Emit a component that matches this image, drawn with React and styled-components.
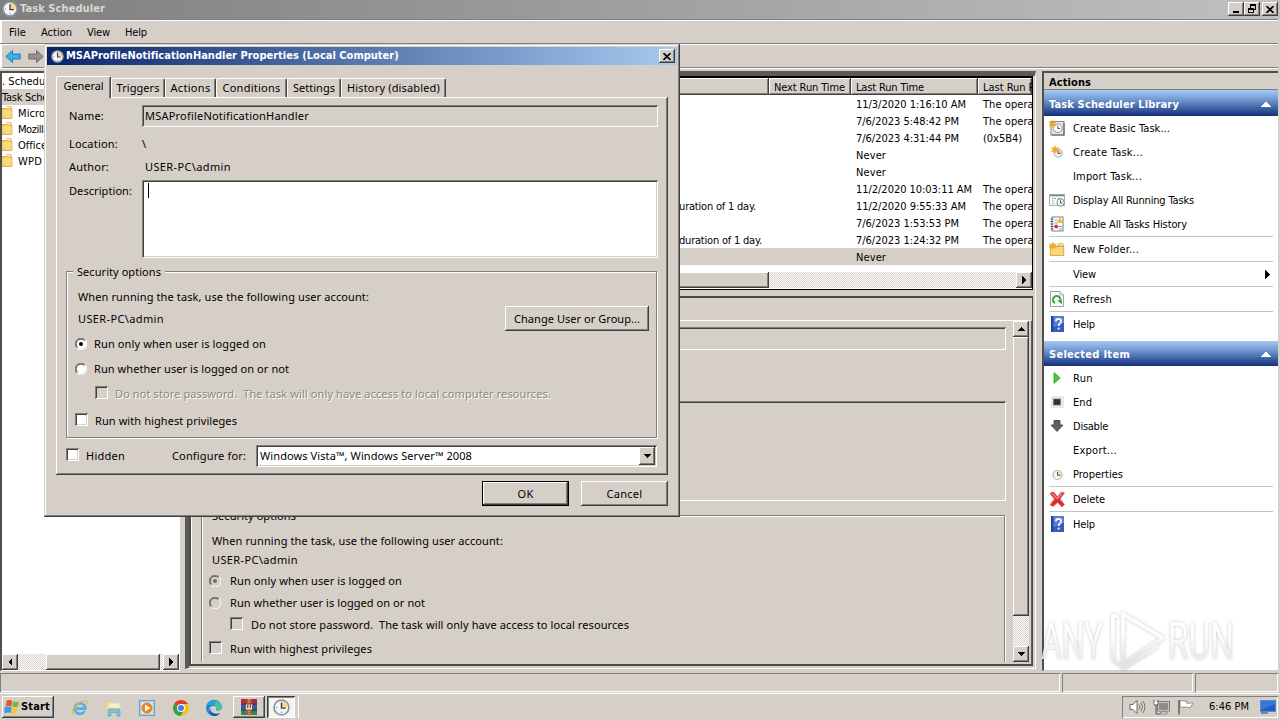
import React, { useLayoutEffect, useRef } from "react";
import styled, { createGlobalStyle, css } from "styled-components";

const FACE = "#d5cfc8";
const UI = `"DejaVu Sans Condensed", "DejaVu Sans", "Liberation Sans", sans-serif`;
const DLG = `"Noto Sans", "Open Sans", "Liberation Sans", sans-serif`;

const Global = createGlobalStyle`
  * { box-sizing: border-box; }
  html, body { margin: 0; padding: 0; }
  body { width: 1280px; height: 720px; overflow: hidden; background: ${FACE}; }
  svg { display: block; flex: none; }
`;

const raised = css`
  background: ${FACE};
  box-shadow: inset -1px -1px #404040, inset 1px 1px #fff, inset -2px -2px #808080;
`;
const sunken = css`
  box-shadow: inset 1px 1px #808080, inset -1px -1px #fff, inset 2px 2px #404040, inset -2px -2px #d4d0c8;
`;
const dither = css`
  background: repeating-conic-gradient(#fff 0 25%, #d4d0c8 0 50%) 0 0 / 2px 2px;
`;

/* ---------- text ---------- */
const TextSpan = styled.span`
  display: block;
  flex: none;
  white-space: pre;
  font-family: ${(p) => (p.$dlg ? DLG : UI)};
  font-stretch: ${(p) => (p.$dlg ? "normal" : "condensed")};
  font-size: 11px;
  line-height: 16px;
  padding-top: ${(p) => (p.$dlg || p.$flat ? 0 : 2)}px;
  font-weight: ${(p) => (p.$bold ? 700 : 400)};
  color: ${(p) => p.$color || "#000"};
  text-shadow: ${(p) => (p.$etched ? "1px 1px #fff" : "none")};
`;

/* Spreads the letters so that the label takes the given width. */
function Text({ w, children, ...rest }) {
  const ref = useRef(null);
  useLayoutEffect(() => {
    const el = ref.current;
    if (!w || !el) return;
    el.style.letterSpacing = "0px";
    el.style.width = "max-content";
    const natural = el.getBoundingClientRect().width;
    el.style.letterSpacing = (w - natural) / children.length + "px";
    el.style.width = w + "px";
  }, [w, children]);
  return (
    <TextSpan ref={ref} {...rest}>
      {children}
    </TextSpan>
  );
}

/* ---------- icons ---------- */
const Clock = ({ s = 16 }) => (
  <svg width={s} height={s} viewBox="0 0 16 16">
    <circle cx="8" cy="8" r="7" fill="#f4f6f8" stroke="#8b939c" strokeWidth="1.6" />
    <path d="M8 8V2.2A5.8 5.8 0 0 1 13.8 8Z" fill="#f7d777" />
    <path d="M8 3.2V8.6H12" fill="none" stroke="#33415c" strokeWidth="1.3" />
    <path d="M3 8h1M8 12v1.2" stroke="#777" />
  </svg>
);
const Star = ({ x = 0, y = 0 }) => (
  <path
    transform={`translate(${x} ${y})`}
    d="M3.5 0l1 2.2L7 1.6 5.6 3.6 7 5.6 4.5 5l-1 2.2L2.6 5 0 5.6l1.5-2L0 1.6l2.6.6z"
    fill="#f6a623"
    stroke="#e9a030"
    strokeWidth=".6"
  />
);
const BasicTask = () => (
  <svg width="16" height="16" viewBox="0 0 16 16">
    <rect x="2" y="1.5" width="13" height="13.5" fill="#e9e6e1" stroke="#8a837d" />
    <path d="M15 3v12H3" fill="none" stroke="#6b6560" strokeWidth="1.2" />
    <circle cx="8.8" cy="8.3" r="4.3" fill="#fff" stroke="#8b949d" />
    <path d="M8.8 5.6v3h2.4" fill="none" stroke="#555" />
    <Star />
  </svg>
);
const NewTask = () => (
  <svg width="16" height="16" viewBox="0 0 16 16">
    <circle cx="9.2" cy="9" r="4.3" fill="#eef1f6" stroke="#a9b3c0" />
    <path d="M9 9V5.2a3.8 3.8 0 0 1 3.8 3.8z" fill="#f7d777" />
    <path d="M9 6v3.4h2.600" fill="none" stroke="#465673" />
    <Star x={2.500} y={2} />
  </svg>
);
const Running = () => (
  <svg width="16" height="16" viewBox="0 0 16 16">
    <rect x=".5" y="2.5" width="15" height="11" fill="#fbfbf8" stroke="#a8b0aa" />
    <path d="M1 3.5h14" stroke="#7c8a94" strokeWidth="1.600" />
    <path d="M3 6.5h4M3 9h3M3 11.5h3M9 6.5h4" stroke="#8aa08c" strokeDasharray="1.5 1" />
    <circle cx="11.500" cy="10.500" r="3.700" fill="#f2f6f2" stroke="#7f9888" />
    <path d="M11.500 8.300v2.600h1.800" fill="none" stroke="#555" />
  </svg>
);
const History = () => (
  <svg width="16" height="16" viewBox="0 0 16 16">
    <rect x="3" y="1" width="11" height="14" fill="#fff" stroke="#76808c" />
    <path d="M1.5 3h3M1.5 5.5h3M1.5 8h3M1.5 10.5h3M1.5 13h3" stroke="#4d5867" />
    <path d="M5.5 4h3M5.5 7h3M9.5 10.5h4M9.5 13h4" stroke="#7f9ad0" />
    <path d="M11 2l2.5 4.5h-5z" fill="#f4c722" stroke="#e0b420" strokeWidth=".8" />
    <circle cx="7.200" cy="10.500" r="2" fill="#d43a32" />
  </svg>
);
const FolderNew = () => (
  <svg width="16" height="16" viewBox="0 0 16 16">
    <path d="M1 4.5h7.5l1-2.5H14l1 2.5V14.5H1z" fill="#e9b64a" />
    <rect x="10" y="2.8" width="3.6" height="1.6" fill="#dff0fb" />
    <path d="M1.2 5.5h13.6v9H1.2z" fill="#f9d77d" stroke="#dba43a" strokeWidth=".8" />
    <Star x={0.2} y={1.2} />
  </svg>
);
const TreeFolder = () => (
  <svg width="12" height="14" viewBox="0 0 12 14">
    <path d="M0 2h4l1-2h4l1 2v11H0z" fill="#e8b84e" />
    <rect x="4.500" y=".8" width="4" height="1.600" fill="#f7fbff" />
    <path d="M0 3h10v9.400H0z" fill="#f8d97e" stroke="#dcaa45" strokeWidth=".7" />
  </svg>
);
const Refresh = () => (
  <svg width="14" height="16" viewBox="0 0 14 16">
    <path d="M.5.5h9.5l3.5 3.5v11.500H.5z" fill="#fbfdfb" stroke="#9aa39b" />
    <path d="M10 .5V4h3.500" fill="#e3e8e3" stroke="#9aa39b" strokeWidth=".7" />
    <path d="M5 12A3.700 3.700 0 1 1 10.200 10" fill="none" stroke="#3aa83c" strokeWidth="2.100" />
    <path d="M7 9.300h5v4.200z" fill="#3aa83c" />
  </svg>
);
const HelpIcon = () => (
  <svg width="13" height="16" viewBox="0 0 13 16">
    <rect width="13" height="16" fill="#3a5dbd" />
    <rect width="2.500" height="16" fill="#27459b" />
    <path d="M2.500 0H13v7L2.500 11z" fill="#6c8ce0" opacity=".7" />
    <path d="M4.900 5.200c0-3.200 5.200-3.200 5.200 0 0 2.100-2.500 2.100-2.500 4.800" fill="none" stroke="#fff" strokeWidth="1.700" />
    <rect x="6.700" y="11.600" width="1.900" height="1.900" fill="#fff" />
  </svg>
);
const RunIcon = () => (
  <svg width="16" height="16" viewBox="0 0 16 16">
    <path d="M5 2.500L11.200 8 5 13.500z" fill="#4fc43c" stroke="#36a32a" strokeWidth=".8" />
  </svg>
);
const EndIcon = () => (
  <svg width="16" height="16" viewBox="0 0 16 16">
    <rect x="2" y="2" width="13" height="12" fill="#e9e8e8" />
    <rect x="4.500" y="5" width="7" height="6" fill="#2f3337" stroke="#70757a" strokeWidth=".7" />
  </svg>
);
const DisableIcon = () => (
  <svg width="16" height="16" viewBox="0 0 16 16">
    <path d="M5 2.500h6V7h3L8 13.500 2 7h3z" fill="#5d6064" stroke="#3b3e42" strokeWidth=".8" />
  </svg>
);
const DeleteIcon = () => (
  <svg width="17" height="17" viewBox="0 0 17 17">
    <path d="M2 1.500l2.500-.5 4 4.500 4-4.500 3 1-4.500 6 4.500 5.500-2.500 2.500-4.500-4.500L4 15.500l-3-1.700L5.500 8 1.200 3z" fill="#e02a2c" stroke="#d86c6c" strokeWidth=".8" />
    <path d="M3 2.500l5.300 5.200L13 2.500" fill="none" stroke="#f48a88" strokeWidth="1.200" />
  </svg>
);
const PropIcon = () => (
  <svg width="16" height="16" viewBox="0 0 16 16">
    <circle cx="8.500" cy="9" r="4.500" fill="#f3f3f4" stroke="#b3b3b8" strokeWidth="1.200" />
    <path d="M8.500 9V5.200A3.800 3.800 0 0 1 12.300 9z" fill="#f7dc9a" />
    <path d="M8.500 6v3.300h2.800" fill="none" stroke="#555" />
  </svg>
);
const Tri = ({ d, s = 8, c = "#000" }) => (
  <svg width={s} height={s} viewBox="0 0 8 8" shapeRendering="crispEdges">
    <path d={{ left: "M6 0v8L2 4z", right: "M2 0v8l4-4z", up: "M0 6h8L4 2z", down: "M0 2h8L4 6z" }[d]} fill={c} />
  </svg>
);
const Arrow = ({ flip }) => (
  <svg width="16" height="15" viewBox="0 0 16 15">
    <path
      transform={flip ? "translate(16 0) scale(-1 1)" : undefined}
      d="M.8 7.500L7.500 1.500V5h7.700v5H7.500v3.500z"
      fill={flip ? "#94918e" : "#3eaee8"}
      stroke={flip ? "#6e6b69" : "#1d7fbe"}
      strokeWidth="1"
    />
  </svg>
);

/* ---------- main window ---------- */
const Desktop = styled.div`
  width: 1280px;
  height: 720px;
  display: flex;
  flex-direction: column;
  background: ${FACE};
  overflow: hidden;
`;
const TitleBar = styled.div`
  height: 19px;
  flex: none;
  display: flex;
  align-items: center;
  gap: 2px;
  padding: 0 2px 1px;
  background: linear-gradient(90deg, #7f7f7f, #c0c0c0);
`;
const CaptionButtons = styled.div`
  margin-left: auto;
  display: flex;
`;
const CaptionButton = styled.div`
  ${raised}
  width: 16px;
  height: 14px;
  margin-left: ${(p) => p.$gap || 0}px;
  display: flex;
  align-items: center;
  justify-content: center;
`;
const MenuBar = styled.div`
  height: 25px;
  flex: none;
  border-top: 1px solid #808080;
  border-bottom: 1px solid #808080;
  margin-right: 2px;
  box-shadow: inset 2px 1px #fff;
  display: flex;
  align-items: center;
  padding-left: 9px;
  gap: 15px;
`;
const ToolBar = styled.div`
  height: 25px;
  flex: none;
  margin: 0 2px 0 0;
  box-shadow: inset 2px 1px #fff, inset 0 -1px #fff, inset 0 -2px #808080;
  padding: 5px 5px;
  display: flex;
  gap: 7px;
`;
const Body = styled.div`
  height: 602px;
  flex: none;
  margin-top: 2px;
  display: flex;
`;
const TreePane = styled.div`
  width: 181px;
  height: 600px;
  border-left: 2px solid #505050;
  border-top: 2px solid #505050;
  border-right: 1px solid #d4d0c8;
  border-bottom: 1px solid #fff;
  background: #fff;
  display: flex;
  flex-direction: column;
  overflow: hidden;
`;
const TreeRow = styled.div`
  height: 16px;
  flex: none;
  display: flex;
  align-items: center;
  gap: 4px;
  background: ${(p) => (p.$sel ? "#d4d0c8" : "#fff")};
`;
const HScroll = styled.div`
  ${dither}
  height: 16px;
  flex: none;
  margin-top: auto;
  margin-right: ${(p) => p.$mr || 0}px;
  display: flex;
`;
const ScrollButton = styled.div`
  ${raised}
  width: 16px;
  height: 16px;
  flex: none;
  display: flex;
  align-items: center;
  justify-content: center;
`;
const HThumb = styled.div`
  ${raised}
  height: 16px;
  width: ${(p) => p.$w}px;
  margin: 0 auto 0 ${(p) => p.$ml || 0}px;
`;
const CenterPane = styled.div`
  width: 851px;
  margin-left: 4px;
  height: 598px;
  background: ${FACE};
  border-left: 4px solid #5a5a5a;
  border-top: 5px solid #5a5a5a;
  border-right: 1px solid #fff;
  border-bottom: 1px solid #fff;
  padding: 0 2px 2px 0;
  display: flex;
  flex-direction: column;
`;
const TaskTable = styled.div`
  height: 214px;
  flex: none;
  border: solid #000;
  border-width: 2px 1px 1px 0;
  background: #fff;
  display: flex;
  flex-direction: column;
  overflow: hidden;
  padding-bottom: 1px;
`;
const TableRow = styled.div`
  display: grid;
  grid-template-columns: 580px 82px 127px 1fr;
  height: 17px;
  flex: none;
  align-items: center;
  overflow: hidden;
  background: ${(p) => (p.$sel ? "#d4d0c8" : "#fff")};
`;
const HeadCell = styled.div`
  ${raised}
  height: 17px;
  padding-left: 5px;
  overflow: hidden;
`;
const Cell = styled.div`
  padding-left: 5px;
  overflow: hidden;
`;
const TriggerCell = styled.div`
  display: flex;
  justify-content: flex-end;
  padding-right: ${(p) => p.$pr}px;
`;
const DetailPane = styled.div`
  margin-top: 6px;
  height: 370px;
  flex: none;
  border: solid #4a4a4a;
  border-width: 2px 1px 2px 2px;
  padding-top: 22px;
  display: flex;
  flex-direction: column;
`;
const DetailPage = styled.div`
  flex: 1;
  min-height: 0;
  border-top: 1px solid #fff;
  border-left: 1px solid #fff;
  border-right: 1px solid #606060;
  display: flex;
  justify-content: space-between;
  padding-right: 2px;
`;
const DetailForm = styled.div`
  width: 805px;
  margin-left: 9px;
  height: 341px;
  overflow: hidden;
`;
const DetailField = styled.div`
  ${sunken}
  height: ${(p) => p.$h}px;
  margin-top: ${(p) => p.$mt}px;
`;
const VScroll = styled.div`
  ${dither}
  width: 16px;
  height: 341px;
  display: flex;
  flex-direction: column;
`;
const VThumb = styled.div`
  ${raised}
  width: 16px;
  height: 279px;
  margin-bottom: auto;
`;
const ActionsPane = styled.div`
  width: 236px;
  height: 600px;
  margin-left: 6px;
  border: solid #505050;
  border-width: 2px 0 0 2px;
  border-bottom: 1px solid #d4d0c8;
  background: #fff;
  display: flex;
  flex-direction: column;
`;
const ActionsHead = styled.div`
  height: 17px;
  flex: none;
  padding-left: 5px;
  background: ${FACE};
  border-bottom: 1px solid #808080;
`;
const SectionHead = styled.div`
  height: ${(p) => p.$h}px;
  flex: none;
  margin-top: ${(p) => p.$mt || 0}px;
  padding: ${(p) => p.$pt || 0}px 7px 0 5px;
  display: flex;
  align-items: center;
  justify-content: space-between;
  background: linear-gradient(#a3c8f2, #7ba3d8 30%, #3f62a6 70%, #14307a);
`;
const ActionRow = styled.div`
  height: 24px;
  flex: none;
  display: flex;
  align-items: center;
  padding: 0 6px 0 4px;
`;
const ActionIcon = styled.div`
  width: 18px;
  margin-right: 7px;
  display: flex;
  justify-content: center;
`;
const Rule = styled.div`
  height: 1px;
  flex: none;
  margin: 0 5px;
  background: #c4c4c4;
`;
const Push = styled.div`
  margin-left: auto;
`;
const StatusBar = styled.div`
  height: 19px;
  flex: none;
  display: flex;
  gap: 2px;
  padding-right: 2px;
`;
const StatusCell = styled.div`
  width: ${(p) => p.$w}px;
  border: solid #808080;
  border-width: 1px 0 0 1px;
  box-shadow: inset -1px -1px #fff;
`;

/* ---------- dialog ---------- */
const Dialog = styled.div`
  position: absolute;
  left: 44px;
  top: 44px;
  width: 636px;
  height: 473px;
  padding: 3px;
  background: ${FACE};
  box-shadow: inset -1px -1px #404040, inset 1px 1px #d4d0c8, inset -2px -2px #808080, inset 2px 2px #fff;
`;
const DialogTitle = styled.div`
  height: 18px;
  display: flex;
  align-items: center;
  gap: 2px;
  padding: 0 2px 0 4px;
  background: linear-gradient(90deg, #0a246a, #a6caf0);
`;
const TabStrip = styled.div`
  display: flex;
  align-items: flex-end;
  height: 32px;
  margin-left: 9px;
`;
const Tab = styled.div`
  width: ${(p) => p.$w}px;
  height: ${(p) => (p.$on ? 22 : 19)}px;
  margin-bottom: ${(p) => (p.$on ? -1 : 0)}px;
  padding-top: 1px;
  position: relative;
  z-index: ${(p) => (p.$on ? 2 : 0)};
  display: flex;
  justify-content: center;
  background: ${FACE};
  border-left: 1px solid #fff;
  border-top: 1px solid #fff;
  border-right: 1px solid #404040;
  border-radius: 2px 2px 0 0;
  box-shadow: inset -1px 0 #808080;
`;
const Page = styled.div`
  width: 612px;
  height: 378px;
  margin-left: 9px;
  padding: 8px 10px 0;
  box-shadow: inset -1px -1px #404040, inset 1px 1px #fff, inset -2px -2px #808080;
`;
const FormRow = styled.div`
  display: flex;
  align-items: ${(p) => (p.$top ? "flex-start" : "center")};
  height: ${(p) => p.$h}px;
  margin-top: ${(p) => p.$mt || 0}px;
`;
const FieldLabel = styled.div`
  width: 76px;
  flex: none;
  padding-left: 3px;
`;
const Input = styled.div`
  ${sunken}
  flex: 1;
  height: ${(p) => p.$h}px;
  padding: ${(p) => p.$pad || "3px 3px"};
  background: ${(p) => (p.$white ? "#fff" : FACE)};
`;
const Caret = styled.div`
  width: 1px;
  height: 15px;
  background: #000;
`;
const Group = styled.div`
  height: ${(p) => p.$h}px;
  margin-top: ${(p) => p.$mt}px;
  margin-right: 1px;
  border: 1px solid #808080;
  box-shadow: 1px 1px #fff, inset 1px 1px #fff;
`;
const Legend = styled.div`
  width: max-content;
  height: 15px;
  margin: -8px 0 0 6px;
  padding: 0 4px;
  background: ${FACE};
`;
const OptionRow = styled.div`
  height: 18px;
  margin-top: ${(p) => p.$mt || 0}px;
  padding-left: ${(p) => p.$pl || 0}px;
  display: flex;
  align-items: center;
  gap: ${(p) => p.$gap || 0}px;
`;
const AccountBlock = styled.div`
  display: flex;
  align-items: flex-end;
  justify-content: space-between;
  margin-top: 9px;
  padding: 0 7px 0 11px;
`;
const Check = styled.div`
  ${sunken}
  width: 13px;
  height: 13px;
  flex: none;
  margin-top: -3px;
  background: ${(p) => (p.$off ? FACE : "#fff")};
`;
const PushButton = styled.div`
  ${raised}
  width: ${(p) => p.$w}px;
  height: 25px;
  margin-bottom: ${(p) => p.$mb || 0}px;
  display: flex;
  align-items: center;
  justify-content: center;
  ${(p) =>
    p.$default &&
    css`
      border: 1px solid #000;
    `}
`;
const DialogButtons = styled.div`
  display: flex;
  justify-content: flex-end;
  gap: 12px;
  margin: 6px 9px 0 0;
`;
const Combo = styled.div`
  ${sunken}
  width: 401px;
  height: 22px;
  padding: 2px 2px 2px 4px;
  background: #fff;
  display: flex;
  align-items: center;
  justify-content: space-between;
`;
const ComboArrow = styled.div`
  ${raised}
  width: 16px;
  height: 18px;
  display: flex;
  align-items: center;
  justify-content: center;
`;
const Radio = ({ on, off }) => (
  <svg width="12" height="12" viewBox="0 0 12 12">
    <circle cx="6" cy="6" r="5" fill={off ? FACE : "#fff"} />
    <path d="M1.800 10.200A5.500 5.500 0 0 1 10.200 1.800" fill="none" stroke="#808080" />
    <path d="M2.500 9.300A4.600 4.600 0 0 1 9.300 2.500" fill="none" stroke="#404040" />
    <path d="M10.200 1.800A5.500 5.500 0 0 1 1.800 10.200" fill="none" stroke="#fff" />
    {on && <circle cx="6" cy="6" r="2" fill={off ? "#707070" : "#000"} />}
  </svg>
);

/* ---------- taskbar ---------- */
const Taskbar = styled.div`
  height: 29px;
  flex: none;
  margin-top: 1px;
  border-top: 1px solid #fff;
  display: flex;
  align-items: flex-start;
  padding: 2px 2px 0 2px;
`;
const StartButton = styled.div`
  ${raised}
  width: 52px;
  height: 22px;
  display: flex;
  align-items: center;
  gap: 1px;
  padding-left: 2px;
`;
const QuickLaunch = styled.div`
  display: flex;
  align-items: center;
  gap: 15.5px;
  height: 23px;
  margin-left: 17px;
`;
const TaskButton = styled.div`
  width: ${(p) => p.$w}px;
  height: 22px;
  margin-left: ${(p) => p.$ml}px;
  display: flex;
  align-items: center;
  justify-content: center;
  ${(p) =>
    p.$on
      ? css`
          background: #f6f4f1;
          box-shadow: inset 1px 1px #404040, inset -1px -1px #fff, inset 2px 2px #808080;
        `
      : raised}
`;
const TaskEdge = styled.div`
  width: 4px;
  height: 22px;
  border-right: 1px solid #fff;
`;
const Tray = styled.div`
  margin-left: auto;
  width: 156px;
  height: 22px;
  padding: 0 2px 0 7px;
  display: flex;
  align-items: center;
  box-shadow: inset 1px 1px #808080, inset -1px -1px #fff;
`;
const TrayIcons = styled.div`
  display: flex;
  gap: 7px;
  margin-right: 15px;
`;

const Flag = () => (
  <svg width="16" height="16" viewBox="0 0 17 17">
    <path d="M2 8C-.2 8.500 0 14 1 15.500 3 14 5 14 7 15L8.300 9C6 8 4 7.800 2 8z" fill="#3f9be0" />
    <path d="M3 1.500C5 .8 7 1 9 2L7.700 8C5.500 7 3.500 7 1.800 7.500z" fill="#e5562a" />
    <path d="M10 2.500c2 .8 4 .8 6 0L14.700 8.300c-2 .7-4 .7-6 0z" fill="#79b93a" />
    <path d="M8.500 9.300c2 .8 4 .8 6 0l-1.500 5.500c-2 .7-4 .7-5.700 0z" fill="#fbc42e" />
  </svg>
);
const IE = () => (
  <svg width="18" height="18" viewBox="0 0 18 18">
    <path d="M13.700 12A5.300 5.300 0 1 1 14.300 9.600H5.500" fill="none" stroke="#4db0e8" strokeWidth="2.600" />
    <path d="M2.300 15.800C-.8 13 5 4.500 11.500 2.200c4.500-1.500 5 .8 3.800 3.600" fill="none" stroke="#e7b93e" strokeWidth="1.200" />
  </svg>
);
const Explorer = () => (
  <svg width="18" height="18" viewBox="0 0 18 18">
    <path d="M2 3h5l1 2h7v10H2z" fill="#f3d478" />
    <rect x="3.500" y="4.500" width="11" height="5" fill="#fbf1c8" />
    <path d="M1.500 8.500h14v4h-14z" fill="#f6dc8a" />
    <path d="M3 17v-5.500q0-1.500 1.500-1.500h9q1.500 0 1.500 1.500V17h-3v-3.500H6V17z" fill="#7dbfe8" stroke="#549cc9" strokeWidth=".6" />
  </svg>
);
const Player = () => (
  <svg width="18" height="18" viewBox="0 0 18 18">
    <rect x="1.500" y="1.500" width="15" height="15" fill="#a9d0ea" stroke="#6b9fc6" />
    <rect x="3.500" y="3.500" width="11" height="11" fill="#e4f2fb" />
    <circle cx="9" cy="9" r="5.500" fill="#f08418" />
    <path d="M7 5.600v6.800L12.400 9z" fill="#fff" />
  </svg>
);
const Chrome = () => (
  <svg width="18" height="18" viewBox="0 0 18 18">
    <circle cx="9" cy="9" r="8" fill="#fbc116" />
    <path d="M9 9L2.100 5A8 8 0 0 1 15.900 5H9z" fill="#e33b2e" />
    <path d="M2.100 5A8 8 0 0 0 8.500 17L12 11 9 9z" fill="#2da14d" />
    <circle cx="9" cy="9" r="4" fill="#fff" />
    <circle cx="9" cy="9" r="3" fill="#3f82ef" />
  </svg>
);
const Edge = () => (
  <svg width="18" height="18" viewBox="0 0 18 18">
    <path d="M1 9a8 8 0 0 1 16-.5c0 3-4.500 3.800-6 2.500 1.500-2-.5-4.500-3-4C3.500 7 3 13 8.500 16.900A8 8 0 0 1 1 9z" fill="#1c86d8" />
    <path d="M1.300 7.500A8 8 0 0 1 17 8.500c0 3-4.500 3.800-6 2.500C13 6 6 3.500 1.300 7.500z" fill="#43c6a4" />
    <path d="M1.300 7.500A8 8 0 0 1 9 1c2 0 2 4 0 5C6 5 3.500 5.500 1.300 7.500z" fill="#2a9fd8" />
    <path d="M5.500 9.500c-.5 4 4 6.500 9.500 4.500-2 3-5 3.300-7 2.900C5 15.500 4 12 5.500 9.500z" fill="#1457a8" />
  </svg>
);
const WinRar = () => (
  <svg width="18" height="18" viewBox="0 0 18 18">
    <rect x="1" y="1" width="16" height="5" fill="#b32a3e" />
    <rect x="1" y="6" width="16" height="6" fill="#3458b0" />
    <rect x="1" y="12" width="16" height="5" fill="#2c8a45" />
    <path d="M1 6h16M1 12h16" stroke="#4b2b38" />
    <rect x="6.500" y="1" width="5" height="16" fill="#a85a3a" />
    <rect x="5.500" y="6" width="7" height="6" fill="#efe3cf" stroke="#7b5448" />
    <path d="M7.700 6.500v3.500M10.300 6.500v3.500" stroke="#6a4c42" strokeWidth="1.200" />
    <path d="M9 12.500v4.500M9 1v4" stroke="#e1c04c" strokeWidth="1.400" strokeDasharray="1.200 1" />
  </svg>
);
const Speaker = () => (
  <svg width="17" height="16" viewBox="0 0 17 16">
    <path d="M1 5.500h3L8 1.500v13L4 10.500H1z" fill="#fff" stroke="#6b6b6b" />
    <path d="M10 5.500q1.600 2.500 0 5M12 3.500q3 4.500 0 9M14 2q3.800 6 0 12" fill="none" stroke="#777" />
  </svg>
);
const Network = () => (
  <svg width="17" height="16" viewBox="0 0 17 16">
    <rect x="5" y="3" width="11" height="8.500" fill="#8c8c8c" stroke="#fff" />
    <rect x="4.500" y="2.500" width="12" height="9.500" fill="none" stroke="#5f5f5f" strokeWidth=".8" />
    <path d="M7.500 13h6.500v2H7.500z" fill="#fff" stroke="#666" strokeWidth=".8" />
    <path d="M1 1v3.500q0 2 2 2t2-2V1M3 6v9h4" fill="none" stroke="#555" />
    <rect x="1.500" y="2.500" width="3" height="2.500" fill="#fff" />
  </svg>
);
const FlagTray = () => (
  <svg width="17" height="16" viewBox="0 0 17 16">
    <path d="M2 1v14.500" stroke="#666" strokeWidth="1.600" />
    <path d="M3 2c3-1.500 4 1 6.500 0v2c2 1 4-.5 6.500 0l-2.500 4.500c-2 .8-3.500-.6-5-.5C6.500 9 5 7.500 3 8.500z" fill="#fff" stroke="#777" strokeWidth=".8" />
  </svg>
);
const Screen = () => (
  <svg width="16" height="14" viewBox="0 0 16 14">
    <rect x=".5" y=".5" width="15" height="11" fill="#1f5fbf" stroke="#5b88c9" />
    <path d="M1 1h14v3L1 10z" fill="#4a8be0" opacity=".6" />
    <path d="M1 13h7" stroke="#3f74bd" strokeWidth="1.500" />
  </svg>
);

const Watermark = styled.svg`
  position: absolute;
  left: 1036px;
  top: 604px;
  pointer-events: none;
  filter: drop-shadow(0 0 1.500px rgba(0, 0, 0, 0.24));
`;

/* ---------- data ---------- */
const tasks = [
  ["", "11/3/2020 1:16:10 AM", 110, "The operation"],
  ["", "7/6/2023 5:48:42 PM", 103, "The operation"],
  ["", "7/6/2023 4:31:44 PM", 103, "(0x5B4)"],
  ["", "Never", 30, ""],
  ["", "Never", 30, ""],
  ["", "11/2/2020 10:03:11 AM", 116, "The operation"],
  ["duration of 1 day.", "11/2/2020 9:55:33 AM", 110, "The operation", 13],
  ["", "7/6/2023 1:53:53 PM", 103, "The operation"],
  ["duration of 1 day.", "7/6/2023 1:24:32 PM", 103, "The operation", 7],
  ["", "Never", 30, ""],
];
const libraryActions = [
  [<BasicTask />, "Create Basic Task...", 97],
  [<NewTask />, "Create Task...", 70],
  [null, "Import Task...", 69],
  [<Running />, "Display All Running Tasks", 121],
  [<History />, "Enable All Tasks History", 114],
  "-",
  [<FolderNew />, "New Folder...", 66],
  "-",
  [null, "View", 23, true],
  "-",
  [<Refresh />, "Refresh", 39],
  "-",
  [<HelpIcon />, "Help", 22],
];
const itemActions = [
  [<RunIcon />, "Run", 20],
  [<EndIcon />, "End", 19],
  [<DisableIcon />, "Disable", 35],
  [null, "Export...", 44],
  [<PropIcon />, "Properties", 50],
  "-",
  [<DeleteIcon />, "Delete", 32],
  "-",
  [<HelpIcon />, "Help", 22],
];

const ActionList = ({ items }) =>
  items.map((it, i) =>
    it === "-" ? (
      <Rule key={i} />
    ) : (
      <ActionRow key={i}>
        <ActionIcon>{it[0]}</ActionIcon>
        <Text w={it[2]}>{it[1]}</Text>
        {it[3] && (
          <Push>
            <Tri d="right" s={9} />
          </Push>
        )}
      </ActionRow>
    )
  );

const CloseGlyph = () => (
  <svg width="8" height="7" viewBox="0 0 8 7">
    <path d="M.5 0l7 7M7.500 0l-7 7" stroke="#000" strokeWidth="1.600" />
  </svg>
);

export default function App() {
  return (
    <>
      <Global />
      <Desktop>
        <TitleBar>
          <Clock />
          <Text w={85} $bold $flat $color="#dcd8d0">Task Scheduler</Text>
          <CaptionButtons>
            <CaptionButton>
              <svg width="8" height="8"><rect x="1" y="6" width="6" height="2" /></svg>
            </CaptionButton>
            <CaptionButton>
              <svg width="10" height="10" shapeRendering="crispEdges">
                <path d="M3 0h6v2H3zM3 2h1v2H3zM8 2h1v4H8zM7 5h1v1H7zM1 4h6v2H1zM1 6h1v3H1zM6 6h1v3H6zM1 8h6v1H1z" />
              </svg>
            </CaptionButton>
            <CaptionButton $gap={2}><CloseGlyph /></CaptionButton>
          </CaptionButtons>
        </TitleBar>
        <MenuBar>
          <Text w={17}>File</Text>
          <Text w={31}>Action</Text>
          <Text w={23}>View</Text>
          <Text w={22}>Help</Text>
        </MenuBar>
        <ToolBar>
          <Arrow />
          <Arrow flip />
        </ToolBar>
        <Body>
          <TreePane>
            <TreeRow><Text w={93}>. Scheduler (Local)</Text></TreeRow>
            <TreeRow $sel><Text w={106}>Task Scheduler Library</Text></TreeRow>
            {[["Microsoft", 46], ["Mozilla", 31], ["Office", 29], ["WPD", 24]].map(([n, w]) => (
              <TreeRow key={n}>
                <TreeFolder />
                <Text w={w}>{n}</Text>
              </TreeRow>
            ))}
            <HScroll $mr={1}>
              <ScrollButton><Tri d="left" /></ScrollButton>
              <HThumb $w={114} $ml={28} />
              <ScrollButton><Tri d="right" /></ScrollButton>
            </HScroll>
          </TreePane>
          <CenterPane>
            <TaskTable>
              <TableRow>
                <HeadCell />
                <HeadCell><Text w={71}>Next Run Time</Text></HeadCell>
                <HeadCell><Text w={68}>Last Run Time</Text></HeadCell>
                <HeadCell><Text w={76}>Last Run Result</Text></HeadCell>
              </TableRow>
              {tasks.map((t, i) => (
                <TableRow key={i} $sel={i === 9}>
                  <TriggerCell $pr={t[4] || 0}>{t[0] && <Text w={83}>{t[0]}</Text>}</TriggerCell>
                  <Cell />
                  <Cell><Text w={t[2]}>{t[1]}</Text></Cell>
                  <Cell>{t[3] && <Text w={t[3][0] === "(" ? 39 : 70}>{t[3]}</Text>}</Cell>
                </TableRow>
              ))}
              <HScroll>
                <HThumb $w={580} />
                <ScrollButton><Tri d="right" /></ScrollButton>
              </HScroll>
            </TaskTable>
            <DetailPane>
              <DetailPage>
                <DetailForm>
                  <DetailField $h={23} $mt={6} />
                  <DetailField $h={100} $mt={51} />
                  <Group $h={160} $mt={14}>
                    <Legend><Text $dlg w={84}>Security options</Text></Legend>
                    <OptionRow $mt={9} $pl={10}><Text $dlg w={291}>When running the task, use the following user account:</Text></OptionRow>
                    <OptionRow $mt={1} $pl={10}><Text $dlg w={86}>USER-PC\admin</Text></OptionRow>
                    <OptionRow $mt={3} $pl={7} $gap={9}><Radio on off /><Text $dlg w={172}>Run only when user is logged on</Text></OptionRow>
                    <OptionRow $mt={4} $pl={7} $gap={9}><Radio off /><Text $dlg w={195}>Run whether user is logged on or not</Text></OptionRow>
                    <OptionRow $mt={4} $pl={28} $gap={8}><Check $off /><Text $dlg w={378}>{"Do not store password.  The task will only have access to local resources"}</Text></OptionRow>
                    <OptionRow $mt={6} $pl={7} $gap={8}><Check $off /><Text $dlg w={142}>Run with highest privileges</Text></OptionRow>
                  </Group>
                </DetailForm>
                <VScroll>
                  <ScrollButton><Tri d="up" /></ScrollButton>
                  <VThumb />
                  <ScrollButton><Tri d="down" /></ScrollButton>
                </VScroll>
              </DetailPage>
            </DetailPane>
          </CenterPane>
          <ActionsPane>
            <ActionsHead><Text $bold w={42}>Actions</Text></ActionsHead>
            <SectionHead $h={26} $pt={1}>
              <Text $bold w={130} $color="#fff">Task Scheduler Library</Text>
              <Tri d="up" s={10} c="#fff" />
            </SectionHead>
            <ActionList items={libraryActions} />
            <SectionHead $h={25} $mt={5}>
              <Text $bold w={81} $color="#fff">Selected Item</Text>
              <Tri d="up" s={10} c="#fff" />
            </SectionHead>
            <ActionList items={itemActions} />
          </ActionsPane>
        </Body>
        <StatusBar>
          <StatusCell $w={1060} />
          <StatusCell $w={131} />
          <StatusCell $w={83} />
        </StatusBar>
        <Taskbar>
          <StartButton>
            <Flag />
            <Text $bold $flat w={29}>Start</Text>
          </StartButton>
          <QuickLaunch>
            <IE />
            <Explorer />
            <Player />
            <Chrome />
            <Edge />
          </QuickLaunch>
          <TaskButton $w={32} $ml={10}><WinRar /></TaskButton>
          <TaskButton $w={28} $ml={2} $on><Clock s={17} /></TaskButton>
          <TaskEdge />
          <Tray>
            <TrayIcons>
              <Speaker />
              <Network />
              <FlagTray />
            </TrayIcons>
            <Text $flat w={40}>6:46 PM</Text>
            <Push><Screen /></Push>
          </Tray>
        </Taskbar>
      </Desktop>

      <Dialog>
        <DialogTitle>
          <Clock s={13} />
          <Text $bold $flat w={332} $color="#fff">MSAProfileNotificationHandler Properties (Local Computer)</Text>
          <Push>
            <CaptionButton><CloseGlyph /></CaptionButton>
          </Push>
        </DialogTitle>
        <TabStrip>
          <Tab $w={55} $on><Text $dlg w={40}>General</Text></Tab>
          <Tab $w={54}><Text $dlg w={43}>Triggers</Text></Tab>
          <Tab $w={51}><Text $dlg w={40}>Actions</Text></Tab>
          <Tab $w={71}><Text $dlg w={58}>Conditions</Text></Tab>
          <Tab $w={54}><Text $dlg w={42}>Settings</Text></Tab>
          <Tab $w={105}><Text $dlg w={93}>History (disabled)</Text></Tab>
        </TabStrip>
        <Page>
          <FormRow $h={22}>
            <FieldLabel><Text $dlg w={35}>Name:</Text></FieldLabel>
            <Input $h={22}><Text $dlg w={164}>MSAProfileNotificationHandler</Text></Input>
          </FormRow>
          <FormRow $h={22} $mt={6}>
            <FieldLabel><Text $dlg w={49}>Location:</Text></FieldLabel>
            <Text $dlg>\</Text>
          </FormRow>
          <FormRow $h={22} $mt={1}>
            <FieldLabel><Text $dlg w={40}>Author:</Text></FieldLabel>
            <OptionRow $pl={3}><Text $dlg w={86}>USER-PC\admin</Text></OptionRow>
          </FormRow>
          <FormRow $h={78} $mt={2} $top>
            <FieldLabel><OptionRow $mt={2}><Text $dlg w={63}>Description:</Text></OptionRow></FieldLabel>
            <Input $h={78} $white $pad="3px 6px"><Caret /></Input>
          </FormRow>
          <Group $h={167} $mt={13}>
            <Legend><Text $dlg w={84}>Security options</Text></Legend>
            <AccountBlock>
              <div>
                <OptionRow><Text $dlg w={291}>When running the task, use the following user account:</Text></OptionRow>
                <OptionRow $mt={4}><Text $dlg w={86}>USER-PC\admin</Text></OptionRow>
              </div>
              <PushButton $w={144} $mb={-3}><Text $dlg w={126}>Change User or Group...</Text></PushButton>
            </AccountBlock>
            <OptionRow $mt={7} $pl={8} $gap={7}><Radio on /><Text $dlg w={172}>Run only when user is logged on</Text></OptionRow>
            <OptionRow $mt={7} $pl={8} $gap={7}><Radio /><Text $dlg w={195}>Run whether user is logged on or not</Text></OptionRow>
            <OptionRow $mt={7} $pl={28} $gap={7}>
              <Check $off />
              <Text $dlg $etched w={436} $color="#8a8783">{"Do not store password.  The task will only have access to local computer resources."}</Text>
            </OptionRow>
            <OptionRow $mt={9} $pl={8} $gap={7}><Check /><Text $dlg w={142}>Run with highest privileges</Text></OptionRow>
          </Group>
          <FormRow $h={22} $mt={7}>
            <OptionRow $gap={7}><Check /><Text $dlg w={39}>Hidden</Text></OptionRow>
            <OptionRow $pl={47} $gap={10}>
              <Text $dlg w={74}>Configure for:</Text>
              <Combo>
                <Text $dlg w={212}>Windows Vista™, Windows Server™ 2008</Text>
                <ComboArrow><Tri d="down" /></ComboArrow>
              </Combo>
            </OptionRow>
          </FormRow>
        </Page>
        <DialogButtons>
          <PushButton $w={87} $default><Text $dlg w={16}>OK</Text></PushButton>
          <PushButton $w={87}><Text $dlg w={36}>Cancel</Text></PushButton>
        </DialogButtons>
      </Dialog>

      <Watermark width="204" height="74" viewBox="0 0 204 74">
        <defs>
          <linearGradient id="fade" x1="0" y1="0" x2="0" y2="1">
            <stop offset="0.4" stopColor="#fff" stopOpacity=".95" />
            <stop offset="1" stopColor="#e4e4e4" stopOpacity=".8" />
          </linearGradient>
        </defs>
        <g fill="url(#fade)" fontFamily="Roboto, sans-serif" fontSize="51">
          <text x="5" y="55" textLength="62" lengthAdjust="spacingAndGlyphs">ANY</text>
          <text x="132" y="55" textLength="66" lengthAdjust="spacingAndGlyphs">RUN</text>
        </g>
        <g fill="none" stroke="url(#fade)" strokeWidth="4" strokeLinejoin="round">
          <path d="M87 10v50l40-26z" />
          <path d="M82 12h-5v44M77 56l11 8 34-22" />
          <path d="M92 22v26" strokeWidth="3" />
        </g>
      </Watermark>
    </>
  );
}
